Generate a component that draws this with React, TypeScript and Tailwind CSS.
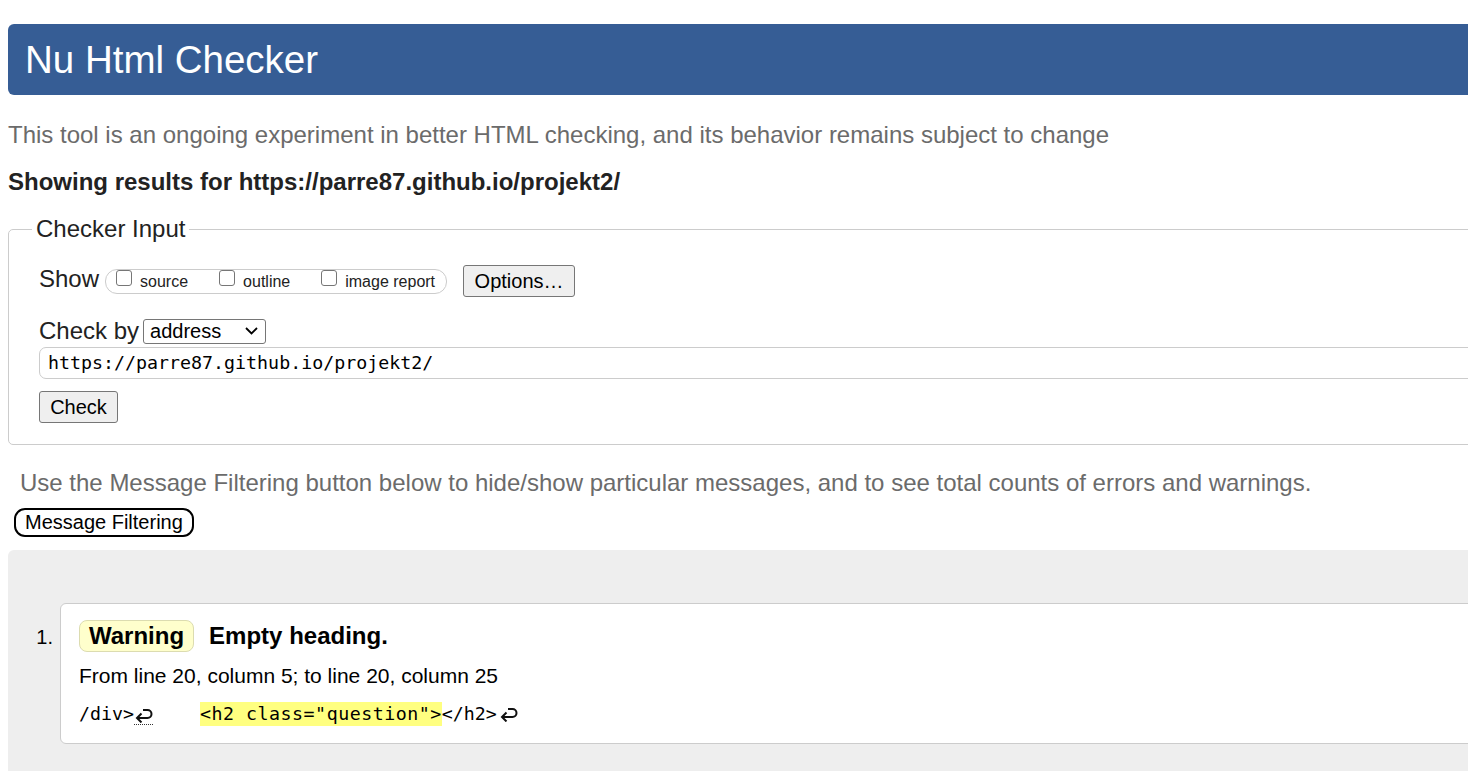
import { useState } from "react";

// Nu Html Checker – results page

const Checkbox = ({ label }: { label: string }) => {
  const [on, setOn] = useState(false);
  return (
    <label className="flex items-center cursor-default" onClick={() => setOn(!on)}>
      <span className="mb-[6px] h-[16px] w-[16px] shrink-0 rounded-[3px] border border-[#767676] bg-white" />
      <span className="ml-[8px] mt-[2px] text-[16px] leading-[18px] text-[#222]">{label}</span>
    </label>
  );
};

const ReturnArrow = () => (
  <svg width="19" height="16" viewBox="0 0 19 16" fill="none" stroke="#111" strokeWidth="2">
    <path d="M9 3h4.5a4 4 0 0 1 0 8H3" />
    <path d="M7.5 6.5L3 11l4.5 4.5" />
  </svg>
);

export default function App() {
  return (
    <div className="h-[771px] w-full overflow-hidden bg-white">
      <div className="w-[1500px] px-2 font-['Liberation_Sans',Arial,sans-serif] text-[#222]">
        {/* titre */}
        <header className="mt-[24px] flex h-[71px] items-center rounded-[6px] bg-[#365d95] pl-[17px]">
          <h1 className="text-[38.5px] leading-[44px] font-normal text-white">Nu Html Checker</h1>
        </header>

        <p className="mt-[26px] text-[24px] leading-[28px] text-[#6b6b6b]">
          This tool is an ongoing experiment in better HTML checking, and its behavior remains subject to change
        </p>
        <p className="mt-[19px] text-[24px] leading-[28px] font-bold text-[#222]">
          Showing results for https://parre87.github.io/projekt2/
        </p>

        {/* Checker Input */}
        <fieldset className="mt-[20px] rounded-[5px] border border-[#ccc]">
          <legend className="ml-[23px] px-[4px] text-[24px] leading-[26px] text-[#222]">Checker Input</legend>
          <div className="pl-[30px] pt-[23px] pb-[21px]">
            <div className="flex h-[32px] items-center">
              <span className="mb-[5px] text-[24px] leading-[28px]">Show</span>
              <div className="ml-[6px] flex h-[25px] items-center gap-[31px] rounded-[12px] border border-[#ccc] pl-[10px] pr-[11px]">
                <Checkbox label="source" />
                <Checkbox label="outline" />
                <Checkbox label="image report" />
              </div>
              <button className="ml-[16px] h-[32px] w-[112px] rounded-[3px] border border-[#767676] bg-[#efefef] text-[20px] leading-[23px] text-black">
                Options…
              </button>
            </div>

            <div className="mt-[20px] flex h-[28px] items-center">
              <span className="text-[24px] leading-[28px]">Check by</span>
              <div className="ml-[4px] flex h-[25px] w-[123px] items-center justify-between rounded-[3px] border border-[#767676] bg-white pl-[6px] pr-[7px]">
                <span className="text-[20px] leading-[23px] text-black">address</span>
                <svg width="13" height="8" viewBox="0 0 13 8" fill="none" stroke="#000" strokeWidth="1.8">
                  <path d="M1 1l5.5 5.5L12 1" />
                </svg>
              </div>
            </div>

            <div className="mt-[2px] flex h-[32px] items-center rounded-[7px] border border-[#ccc] pl-[8px]">
              <span className="font-['DejaVu_Sans_Mono',monospace] text-[18.3px] leading-[22px] text-black">
                https://parre87.github.io/projekt2/
              </span>
            </div>

            <button className="mt-[12px] block h-[32px] w-[79px] rounded-[3px] border border-[#767676] bg-[#efefef] text-[20px] leading-[23px] text-black">
              Check
            </button>
          </div>
        </fieldset>

        <p className="mt-[24px] pl-[12px] text-[24px] leading-[28px] text-[#6b6b6b]">
          Use the Message Filtering button below to hide/show particular messages, and to see total counts of errors and warnings.
        </p>
        <button className="ml-[6px] mt-[11px] block h-[29px] rounded-[11px] border-2 border-black bg-white px-[9px] text-[20px] leading-[25px] text-black">
          Message Filtering
        </button>

        {/* resultats */}
        <div className="mt-[13px] h-[300px] rounded-tl-[6px] bg-[#eee] pt-[53px]">
          <ol className="flex items-baseline">
            <span className="w-[52px] pr-[7px] text-right text-[20px] leading-[24px] text-black">1.</span>
            <li className="flex-1 rounded-[6px] border border-[#ccc] bg-white pl-[18px] pt-[16px] pb-[17px] text-black">
              <div className="flex items-baseline">
                <span className="rounded-[8px] border border-[#dcdcb0] bg-[#ffffcc] px-[9px] py-[1px] text-[24px] leading-[28px] font-bold">
                  Warning
                </span>
                <span className="ml-[15px] text-[24px] leading-[28px] font-bold">Empty heading.</span>
              </div>
              <p className="mt-[12px] text-[21px] leading-[24px]">From line 20, column 5; to line 20, column 25</p>
              <p className="mt-[14px] flex items-end whitespace-pre font-['DejaVu_Sans_Mono',monospace] text-[18.3px] leading-[24px]">
                <span>/div&gt;</span>
                <span className="flex w-[22px] items-end">
                  <span className="mb-[1px] border-b border-dotted border-[#333] pb-[1px]">
                    <ReturnArrow />
                  </span>
                </span>
                <span>{"    "}</span>
                <mark className="bg-[#ffff80] tracking-[0.5px] text-black">&lt;h2 class="question"&gt;</mark>
                <span>&lt;/h2&gt;</span>
                <span className="ml-[2px] mb-[4px]">
                  <ReturnArrow />
                </span>
              </p>
            </li>
          </ol>
        </div>
      </div>
    </div>
  );
}
